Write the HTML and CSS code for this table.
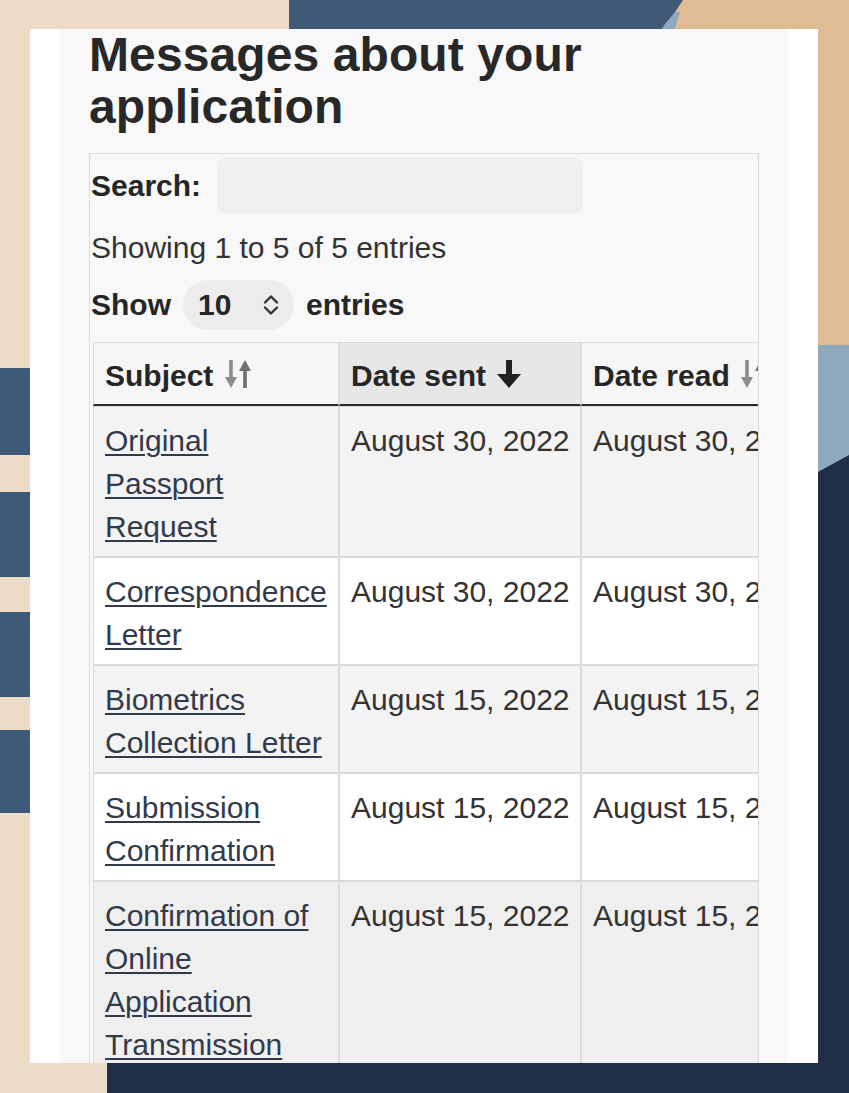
FILE: index.html
```html
<!DOCTYPE html>
<html lang="en">
<head>
<meta charset="utf-8">
<title>Messages about your application</title>
<link rel="stylesheet" href="styles.css">
</head>
<body>
<div class="decor" aria-hidden="true">
  <div class="shape-tan"></div>
  <div class="shape-lightblue"></div>
  <div class="shape-sliver"></div>
  <div class="shape-topblue"></div>
  <div class="shape-navy"></div>
  <div class="stripe stripe-1"></div>
  <div class="stripe stripe-2"></div>
  <div class="stripe stripe-3"></div>
  <div class="stripe stripe-4"></div>
</div>

<main class="card">
  <div class="panel">
    <h1 class="title">Messages about your application</h1>

    <div class="dt-wrapper">
      <div class="dt-search">
        <label class="dt-label" for="search">Search:</label>
        <input id="search" class="dt-input" type="search">
      </div>

      <div class="dt-info">Showing 1 to 5 of 5 entries</div>

      <div class="dt-length">
        <span class="dt-label">Show</span>
        <span class="dt-select">
          <span class="dt-select-value">10</span>
          <svg class="dt-chevron" width="18" height="22" viewBox="0 0 18 22">
            <polyline points="3,8.5 9,2.5 15,8.5" fill="none" stroke="#333" stroke-width="2.4" stroke-linecap="round" stroke-linejoin="round"/>
            <polyline points="3,13.5 9,19.5 15,13.5" fill="none" stroke="#333" stroke-width="2.4" stroke-linecap="round" stroke-linejoin="round"/>
          </svg>
        </span>
        <span class="dt-label">entries</span>
      </div>

      <div class="dt-scroll">
        <table class="dt-table">
          <thead>
            <tr>
              <th class="col-subject">Subject
                <svg class="sort-icon" width="28" height="30" viewBox="0 0 28 30">
                  <line x1="7" y1="1" x2="7" y2="20" stroke="#8c8c8c" stroke-width="3.6"/>
                  <polygon points="1,18 13,18 7,29" fill="#8c8c8c"/>
                  <line x1="21" y1="29" x2="21" y2="10" stroke="#6f6f6f" stroke-width="3.6"/>
                  <polygon points="15,12 27,12 21,1" fill="#6f6f6f"/>
                </svg>
              </th>
              <th class="col-date sorted">Date sent
                <svg class="sort-icon" width="26" height="30" viewBox="0 0 26 30">
                  <rect x="10" y="1" width="6" height="16" fill="#222"/>
                  <polygon points="1,15 25,15 13,29" fill="#222"/>
                </svg>
              </th>
              <th class="col-date">Date read
                <svg class="sort-icon" width="28" height="30" viewBox="0 0 28 30">
                  <line x1="7" y1="1" x2="7" y2="20" stroke="#8c8c8c" stroke-width="3.6"/>
                  <polygon points="1,18 13,18 7,29" fill="#8c8c8c"/>
                  <line x1="21" y1="29" x2="21" y2="10" stroke="#6f6f6f" stroke-width="3.6"/>
                  <polygon points="15,12 27,12 21,1" fill="#6f6f6f"/>
                </svg>
              </th>
            </tr>
          </thead>
          <tbody>
            <tr class="odd">
              <td><a href="#">Original Passport Request</a></td>
              <td class="date">August 30, 2022</td>
              <td class="date">August 30, 2022</td>
            </tr>
            <tr class="even">
              <td><a href="#">Correspondence Letter</a></td>
              <td class="date">August 30, 2022</td>
              <td class="date">August 30, 2022</td>
            </tr>
            <tr class="odd">
              <td><a href="#">Biometrics Collection Letter</a></td>
              <td class="date">August 15, 2022</td>
              <td class="date">August 15, 2022</td>
            </tr>
            <tr class="even">
              <td><a href="#">Submission Confirmation</a></td>
              <td class="date">August 15, 2022</td>
              <td class="date">August 15, 2022</td>
            </tr>
            <tr class="odd last">
              <td><a href="#">Confirmation of Online Application Transmission</a></td>
              <td class="date">August 15, 2022</td>
              <td class="date">August 15, 2022</td>
            </tr>
          </tbody>
        </table>
      </div>
    </div>
  </div>
</main>
</body>
</html>
```

FILE: styles.css
```css
* {
  box-sizing: border-box;
}

html, body {
  margin: 0;
  padding: 0;
}

body {
  width: 849px;
  height: 1093px;
  overflow: hidden;
  position: relative;
  background: #ecdcc7;
  font-family: "Liberation Sans", Arial, sans-serif;
  color: #333;
}

/* ---------- decorative background ---------- */
.decor {
  position: absolute;
  inset: 0;
  z-index: 0;
}

.shape-tan {
  position: absolute;
  left: 640px;
  top: 0;
  right: 0;
  height: 520px;
  background: #dfbc93;
}

.shape-lightblue {
  position: absolute;
  left: 700px;
  top: 345px;
  right: 0;
  height: 160px;
  background: #8ea8bd;
  border-top-left-radius: 40px 4px;
}

.shape-sliver {
  position: absolute;
  left: 640px;
  top: 12px;
  width: 40px;
  height: 20px;
  background: #8ea8bd;
  clip-path: polygon(30px 0, 40px 0, 34px 20px, 20px 20px);
}

.shape-topblue {
  position: absolute;
  left: 289px;
  top: 0;
  width: 400px;
  height: 34px;
  background: #3e5a76;
  clip-path: polygon(0 0, 394px 0, 386px 12px, 376px 24px, 369px 34px, 0 34px);
}

.shape-navy {
  position: absolute;
  left: 107px;
  top: 440px;
  right: 0;
  bottom: 0;
  background: #1f2e46;
  clip-path: polygon(0 34px, 711px 32px, 742px 15px, 742px 653px, 0 653px);
}

.stripe {
  position: absolute;
  left: 0;
  width: 30px;
  background: #3d5a78;
}
.stripe-1 { top: 368px; height: 87px; }
.stripe-2 { top: 492px; height: 85px; }
.stripe-3 { top: 612px; height: 85px; }
.stripe-4 { top: 730px; height: 83px; }

/* ---------- card ---------- */
.card {
  position: relative;
  z-index: 1;
  margin: 29px 31px 0 30px;
  height: 1034px;
  background: #ffffff;
  padding: 0 30px;
  overflow: hidden;
}

.panel {
  height: 100%;
  background: #f8f8f8;
  padding: 0 29px;
}

.title {
  margin: 0;
  font-size: 48px;
  line-height: 52px;
  font-weight: 700;
  color: #282828;
  letter-spacing: 0.1px;
}

/* ---------- datatable wrapper ---------- */
.dt-wrapper {
  margin-top: 20px;
  border: 1px solid #dcdcdc;
  border-bottom: none;
  padding: 3px 0 0 1px;
  height: 940px;
  overflow: hidden;
}

.dt-label {
  font-size: 30px;
  font-weight: 700;
  color: #262626;
  line-height: 34px;
}

.dt-search {
  display: flex;
  align-items: center;
  gap: 16px;
  height: 57px;
}

.dt-input {
  width: 366px;
  height: 57px;
  border: none;
  border-radius: 9px;
  background: #efefef;
  margin: 0;
  padding: 0 12px;
  font: inherit;
}

.dt-info {
  margin-top: 14px;
  font-size: 30px;
  line-height: 40px;
  color: #333;
}

.dt-length {
  margin-top: 12px;
  display: flex;
  align-items: center;
  gap: 12px;
  height: 50px;
}

.dt-select {
  display: flex;
  align-items: center;
  justify-content: space-between;
  width: 111px;
  height: 50px;
  padding: 0 14px 0 15px;
  border-radius: 25px;
  background: #ececec;
}

.dt-select-value {
  font-size: 30px;
  font-weight: 700;
  color: #262626;
}

.dt-chevron {
  display: block;
}

/* ---------- table ---------- */
.dt-scroll {
  margin-top: 12px;
  margin-left: 2px;
  overflow: hidden;
}

.dt-table {
  table-layout: fixed;
  width: 730px;
  border-collapse: separate;
  border-spacing: 0;
  font-size: 30px;
  line-height: 43px;
}

.dt-table th,
.dt-table td {
  border: 1px solid #dadada;
  text-align: left;
  vertical-align: top;
  padding: 12px 10px 8px 11px;
}

.dt-table th {
  font-weight: 700;
  color: #262626;
  background: #f6f6f6;
  padding: 11px 10px 7px 11px;
  border-bottom: 2px solid #2a2a2a;
  white-space: nowrap;
}

.dt-table th.sorted {
  background: #e7e7e7;
}

.col-subject { width: 246px; }
.col-date { width: 242px; }

.sort-icon {
  vertical-align: -3px;
  margin-left: 2px;
}

.dt-table td.date {
  white-space: nowrap;
  color: #333;
}

.dt-table tr.odd td {
  background: #f3f3f3;
}

.dt-table tr.even td {
  background: #ffffff;
}

.dt-table tr.last td {
  background: #efefef;
  height: 300px;
}

.dt-table a {
  color: #313a4b;
  text-decoration: underline;
  text-decoration-thickness: 2px;
  text-underline-offset: 3px;
}
```
